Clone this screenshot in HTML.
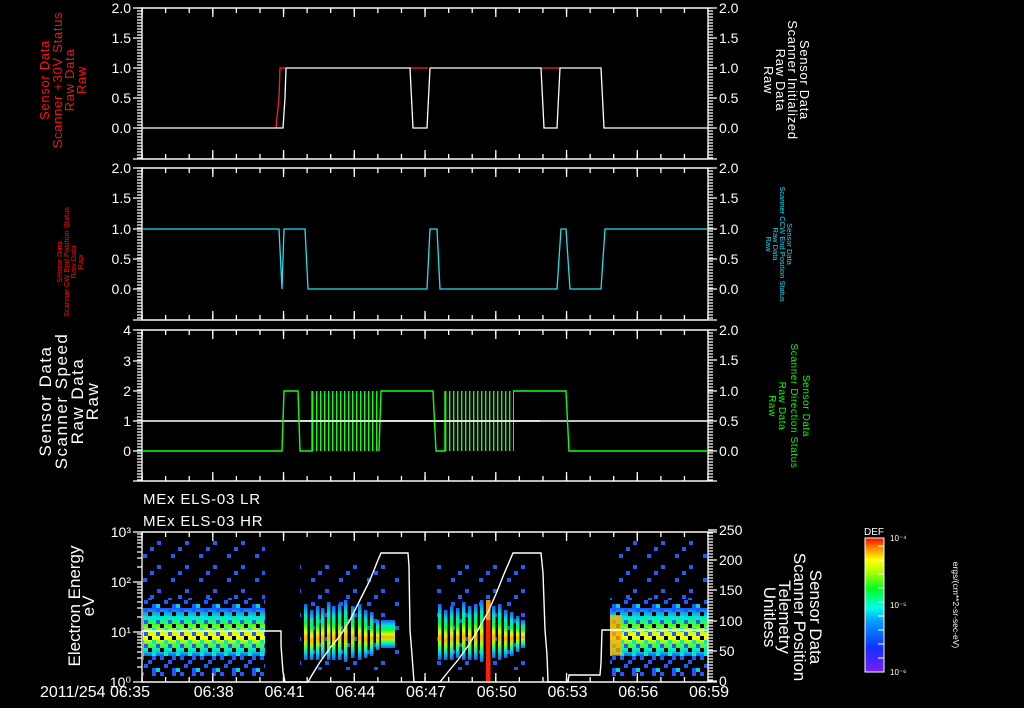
<!DOCTYPE html>
<html><head><meta charset="utf-8"><style>
html,body{margin:0;padding:0;background:#000;}
svg{display:block;font-family:"Liberation Sans",sans-serif;}
</style></head><body>
<svg width="1024" height="708" viewBox="0 0 1024 708" xmlns="http://www.w3.org/2000/svg">
<defs>
<linearGradient id="cb" x1="0" y1="1" x2="0" y2="0">
<stop offset="0" stop-color="#7a1cff"/><stop offset="0.18" stop-color="#1030ff"/><stop offset="0.38" stop-color="#00a0ff"/><stop offset="0.48" stop-color="#00ffe8"/><stop offset="0.62" stop-color="#00ff20"/><stop offset="0.76" stop-color="#c0ff00"/><stop offset="0.84" stop-color="#ffff00"/><stop offset="0.93" stop-color="#ff8000"/><stop offset="1" stop-color="#ff0000"/></linearGradient>
<linearGradient id="band" x1="0" y1="0" x2="0" y2="1">
<stop offset="0" stop-color="#1a5cff"/><stop offset="0.2" stop-color="#00e8d0"/><stop offset="0.35" stop-color="#40ff20"/><stop offset="0.5" stop-color="#d0ff00"/><stop offset="0.62" stop-color="#ffff00"/><stop offset="0.75" stop-color="#60ff20"/><stop offset="0.88" stop-color="#00e8d0"/><stop offset="1" stop-color="#1a5cff"/></linearGradient>
<linearGradient id="col" x1="0" y1="0" x2="0" y2="1">
<stop offset="0" stop-color="#1a5cff"/><stop offset="0.2" stop-color="#00e8d0"/><stop offset="0.35" stop-color="#00ff40"/><stop offset="0.5" stop-color="#e0ff00"/><stop offset="0.6" stop-color="#ffb000"/><stop offset="0.7" stop-color="#a0ff00"/><stop offset="0.85" stop-color="#00e8d0"/><stop offset="1" stop-color="#1a5cff"/></linearGradient>
<pattern id="sparse" width="28" height="24" patternUnits="userSpaceOnUse">
<rect x="3" y="2" width="4" height="4" fill="#1a5cff"/><rect x="17" y="13" width="4" height="4" fill="#1a5cff"/><rect x="10" y="19" width="4" height="4" fill="#1a5cff"/></pattern>
<pattern id="dense" width="20" height="16" patternUnits="userSpaceOnUse">
<rect x="0" y="0" width="4" height="4" fill="#1a5cff"/><rect x="8" y="4" width="4" height="4" fill="#1a5cff"/><rect x="12" y="0" width="4" height="4" fill="#1a5cff"/><rect x="4" y="8" width="4" height="4" fill="#1a5cff"/><rect x="16" y="12" width="4" height="4" fill="#00d0e0"/><rect x="12" y="12" width="4" height="4" fill="#1a5cff"/></pattern>
<pattern id="tex" width="12" height="12" patternUnits="userSpaceOnUse">
<rect x="4" y="0" width="4" height="4" fill="#000"/><rect x="0" y="8" width="4" height="4" fill="#1a5cff"/><rect x="8" y="4" width="4" height="4" fill="#00e8d0"/></pattern>
</defs>
<rect width="1024" height="708" fill="#000"/>

<g>
<rect x="143" y="540" width="122" height="60" fill="url(#sparse)"/>
<rect x="143" y="598" width="122" height="78" fill="url(#dense)"/>
<rect x="143" y="608" width="122" height="48" fill="url(#band)"/>
<rect x="143" y="608" width="122" height="48" fill="url(#tex)"/>
<rect x="610" y="540" width="98" height="60" fill="url(#sparse)"/>
<rect x="610" y="598" width="98" height="78" fill="url(#dense)"/>
<rect x="610" y="608" width="98" height="48" fill="url(#band)"/>
<rect x="610" y="608" width="98" height="48" fill="url(#tex)"/>
<rect x="610" y="615" width="12" height="40" fill="#ffb000" opacity="0.8"/>
<rect x="300" y="560" width="100" height="110" fill="url(#sparse)"/>
<rect x="434" y="560" width="95" height="110" fill="url(#sparse)"/>
<g fill="url(#col)">
<rect x="304" y="604" width="3.5" height="56"/><rect x="310" y="610" width="3.5" height="50"/><rect x="316" y="606" width="3.5" height="54"/><rect x="321" y="608" width="3.5" height="50"/><rect x="327" y="602" width="3.5" height="58"/><rect x="332" y="606" width="3.5" height="54"/><rect x="338" y="604" width="3.5" height="56"/><rect x="344" y="600" width="3.5" height="62"/><rect x="351" y="606" width="3.5" height="52"/><rect x="358" y="604" width="3.5" height="56"/><rect x="364" y="610" width="3.5" height="48"/><rect x="370" y="612" width="3.5" height="44"/><rect x="376" y="620" width="3.5" height="30"/><rect x="381" y="620" width="14" height="28"/>
<rect x="438" y="604" width="3.5" height="56"/><rect x="444" y="610" width="3.5" height="50"/><rect x="450" y="606" width="3.5" height="54"/><rect x="456" y="608" width="3.5" height="50"/><rect x="462" y="602" width="3.5" height="58"/><rect x="468" y="606" width="3.5" height="54"/><rect x="474" y="604" width="3.5" height="56"/><rect x="480" y="600" width="3.5" height="62"/><rect x="492" y="606" width="3.5" height="52"/><rect x="498" y="604" width="3.5" height="56"/><rect x="504" y="610" width="3.5" height="48"/><rect x="510" y="612" width="3.5" height="44"/><rect x="516" y="616" width="3.5" height="36"/><rect x="521" y="620" width="4" height="28"/>
</g>
<rect x="486" y="605" width="4.5" height="77" fill="#ff2000"/>
<rect x="486" y="600" width="4.5" height="20" fill="#ff9000"/>
</g>

<g fill="none" stroke="#fff" stroke-width="1.3">
<rect x="142" y="8" width="566" height="151"/>
<rect x="142" y="168" width="566" height="152"/>
<rect x="142" y="330" width="566" height="151"/>
<rect x="142" y="532" width="566" height="150"/>
<line x1="133" y1="8" x2="717" y2="8"/><line x1="133" y1="159" x2="717" y2="159"/>
<line x1="133" y1="168" x2="717" y2="168"/><line x1="133" y1="320" x2="717" y2="320"/>
<line x1="133" y1="330" x2="717" y2="330"/><line x1="133" y1="481" x2="717" y2="481"/>
<line x1="133" y1="532" x2="717" y2="532"/><line x1="133" y1="682" x2="717" y2="682"/>
<g stroke-width="5" stroke-dasharray="1.2 1.8">
<line x1="139.5" y1="7.4" x2="139.5" y2="159"/><line x1="710.5" y1="7.4" x2="710.5" y2="159"/>
<line x1="139.5" y1="167.4" x2="139.5" y2="320"/><line x1="710.5" y1="167.4" x2="710.5" y2="320"/>
<line x1="139.5" y1="329.4" x2="139.5" y2="481"/><line x1="710.5" y1="329.4" x2="710.5" y2="481"/>
<line x1="710.5" y1="529.4" x2="710.5" y2="682"/>
</g>
<path d="M133 38H142M133 68H142M133 98H142M133 128H142M708 38H717M708 68H717M708 98H717M708 128H717
M133 198H142M133 229H142M133 259H142M133 289H142M708 198H717M708 229H717M708 259H717M708 289H717
M133 361H142M133 391H142M133 421H142M133 451H142M708 360H717M708 391H717M708 421H717M708 451H717
M708 530H717M708 560H717M708 590H717M708 621H717M708 651H717M708 681H717
M133 632H142M133 582H142
M137 667H142M137 658H142M137 652H142M137 647H142M137 643H142M137 640H142M137 637H142M137 634H142
M137 617H142M137 608H142M137 602H142M137 597H142M137 593H142M137 590H142M137 587H142M137 584H142
M137 567H142M137 558H142M137 552H142M137 547H142M137 543H142M137 540H142M137 537H142M137 534H142"/>
<g stroke-width="5" stroke-dasharray="1.3 22.283">
<line x1="141.4" y1="10.5" x2="708" y2="10.5"/><line x1="141.4" y1="156.5" x2="708" y2="156.5"/>
<line x1="141.4" y1="170.5" x2="708" y2="170.5"/><line x1="141.4" y1="317.5" x2="708" y2="317.5"/>
<line x1="141.4" y1="332.5" x2="708" y2="332.5"/><line x1="141.4" y1="478.5" x2="708" y2="478.5"/>
<line x1="141.4" y1="534.5" x2="708" y2="534.5"/><line x1="141.4" y1="679.5" x2="708" y2="679.5"/>
</g>
<g stroke-width="9" stroke-dasharray="1.3 69.45">
<line x1="141.4" y1="12.5" x2="708" y2="12.5"/><line x1="141.4" y1="154.5" x2="708" y2="154.5"/>
<line x1="141.4" y1="172.5" x2="708" y2="172.5"/><line x1="141.4" y1="315.5" x2="708" y2="315.5"/>
<line x1="141.4" y1="334.5" x2="708" y2="334.5"/><line x1="141.4" y1="476.5" x2="708" y2="476.5"/>
<line x1="141.4" y1="536.5" x2="708" y2="536.5"/><line x1="141.4" y1="677.5" x2="708" y2="677.5"/>
</g>
<polyline stroke="#ff2020" points="276,128 279,98 280,68 285,68"/>
<line stroke="#ff2020" x1="410" y1="68" x2="428" y2="68"/><line stroke="#ff2020" x1="541" y1="68" x2="560" y2="68"/>
<polyline points="142,128 283,128 285,98 286,68 410,68 413,128 427,128 430,68 541,68 544,128 557,128 560,68 601,68 604,128 708,128"/>
<polyline stroke="#20e0f0" points="142,229 279,229 282,289 284,229 305,229 308,289 427,289 430,229 437,229 440,289 557,289 561,229 566,229 570,289 601,289 605,229 708,229"/>
<line x1="142" y1="421" x2="708" y2="421" stroke-width="1.6"/>
<polyline stroke="#10ff10" stroke-width="1.4" points="142,451 282,451 284,391 298,391 300,451 304,451 308,451 312,451 312,391"/>
<polyline stroke="#10ff10" stroke-width="1.4" points="379,451 381,391 433,391 436,451 445,451 445,391"/>
<polyline stroke="#10ff10" stroke-width="1.4" points="513,391 515,391 566,391 569,451 708,451"/>
<line stroke="#10ff10" x1="312" y1="421" x2="380" y2="421" stroke-width="60" stroke-dasharray="1.4 2.6"/>
<line stroke="#10ff10" x1="445" y1="421" x2="514" y2="421" stroke-width="60" stroke-dasharray="1.4 2.6"/>
<line stroke="#fff" x1="300" y1="421" x2="540" y2="421" stroke-width="1.4"/>
<polyline stroke-width="1.4" points="142,631 281,631 281,645 283,672 285,682 308,682 312,675 320,662 330,648 340,636 350,620 360,600 370,580 378,560 381,553 408,553 409,566 410,630 412,655 414,682 440,682 448,672 458,660 468,646 478,630 488,612 496,594 504,574 510,560 513,553 541,553 543,573 545,630 547,655 548,682 568,682 569,675 600,675 601,663 602,630 708,630"/>
</g>

<g fill="#fff" font-size="14" text-anchor="end">
<text x="131" y="13">2.0</text><text x="131" y="43">1.5</text><text x="131" y="73">1.0</text><text x="131" y="103">0.5</text><text x="131" y="133">0.0</text>
<text x="131" y="173">2.0</text><text x="131" y="203">1.5</text><text x="131" y="234">1.0</text><text x="131" y="264">0.5</text><text x="131" y="294">0.0</text>
<text x="131" y="335">4</text><text x="131" y="366">3</text><text x="131" y="396">2</text><text x="131" y="426">1</text><text x="131" y="456">0</text>
<text x="131" y="537">10³</text><text x="131" y="587">10²</text><text x="131" y="637">10¹</text><text x="131" y="687">10⁰</text>
</g>
<g fill="#fff" font-size="14">
<text x="719" y="13">2.0</text><text x="719" y="43">1.5</text><text x="719" y="73">1.0</text><text x="719" y="103">0.5</text><text x="719" y="133">0.0</text>
<text x="719" y="173">2.0</text><text x="719" y="203">1.5</text><text x="719" y="234">1.0</text><text x="719" y="264">0.5</text><text x="719" y="294">0.0</text>
<text x="719" y="335">2.0</text><text x="719" y="365">1.5</text><text x="719" y="396">1.0</text><text x="719" y="426">0.5</text><text x="719" y="456">0.0</text>
<text x="719" y="535">250</text><text x="719" y="565">200</text><text x="719" y="595">150</text><text x="719" y="626">100</text><text x="719" y="656">50</text><text x="719" y="686">0</text>
</g>
<g fill="#fff" font-size="16" text-anchor="middle">
<text x="40" y="697" text-anchor="start">2011/254 06:35</text>
<text x="213.75" y="697">06:38</text><text x="284.5" y="697">06:41</text><text x="355.25" y="697">06:44</text><text x="426" y="697">06:47</text><text x="496.75" y="697">06:50</text><text x="567.5" y="697">06:53</text><text x="638.25" y="697">06:56</text><text x="709" y="697">06:59</text>
</g>

<g font-size="13" fill="#ff1010" text-anchor="middle" letter-spacing="0.7">
<text transform="translate(49,80) rotate(-90)">Sensor Data</text>
<text transform="translate(62,80) rotate(-90)">Scanner +30V Status</text>
<text transform="translate(74,80) rotate(-90)">Raw Data</text>
<text transform="translate(86,80) rotate(-90)">Raw</text>
</g>
<g font-size="7.5" fill="#ff1010" text-anchor="middle">
<text transform="translate(62,262) rotate(-90)">Sensor Data</text>
<text transform="translate(69,262) rotate(-90)">Scanner CW End Position Status</text>
<text transform="translate(76,262) rotate(-90)">Raw Data</text>
<text transform="translate(83,262) rotate(-90)">Raw</text>
</g>
<g font-size="17" fill="#fff" text-anchor="middle" letter-spacing="1.5">
<text transform="translate(51,401) rotate(-90)">Sensor Data</text>
<text transform="translate(67,401) rotate(-90)">Scanner Speed</text>
<text transform="translate(83,401) rotate(-90)">Raw Data</text>
<text transform="translate(98,401) rotate(-90)">Raw</text>
</g>
<g font-size="17" fill="#fff" text-anchor="middle">
<text transform="translate(80,606) rotate(-90)">Electron Energy</text>
<text transform="translate(94,606) rotate(-90)">eV</text>
</g>
<g font-size="13" fill="#fff" text-anchor="middle" letter-spacing="0.7">
<text transform="translate(800,80) rotate(90)">Sensor Data</text>
<text transform="translate(788,80) rotate(90)">Scanner Initialized</text>
<text transform="translate(776,80) rotate(90)">Raw Data</text>
<text transform="translate(764,80) rotate(90)">Raw</text>
</g>
<g font-size="7.5" fill="#00e0ff" text-anchor="middle">
<text transform="translate(787,244) rotate(90)">Sensor Data</text>
<text transform="translate(780,244) rotate(90)">Scanner CCW End Position Status</text>
<text transform="translate(773,244) rotate(90)">Raw Data</text>
<text transform="translate(766,244) rotate(90)">Raw</text>
</g>
<g font-size="10" fill="#00ff00" text-anchor="middle" letter-spacing="0.6">
<text transform="translate(803,406) rotate(90)">Sensor Data</text>
<text transform="translate(791,406) rotate(90)">Scanner Direction Status</text>
<text transform="translate(779,406) rotate(90)">Raw Data</text>
<text transform="translate(769,406) rotate(90)">Raw</text>
</g>
<g font-size="17" fill="#fff" text-anchor="middle">
<text transform="translate(810,617) rotate(90)">Sensor Data</text>
<text transform="translate(794,617) rotate(90)">Scanner Position</text>
<text transform="translate(779,617) rotate(90)">Telemetry</text>
<text transform="translate(764,617) rotate(90)">Unitless</text>
</g>
<text x="143" y="504" font-size="15" fill="#fff" letter-spacing="0.8">MEx ELS-03 LR</text>
<text x="143" y="526" font-size="15" fill="#fff" letter-spacing="0.8">MEx ELS-03 HR</text>
<rect x="865" y="538" width="19" height="134" fill="url(#cb)" stroke="#fff" stroke-width="1"/>
<path d="M878 546H884M878 560H884M878 574H884M878 588H884M878 602H884M878 616H884M878 630H884M878 644H884M878 658H884" stroke="#fff" stroke-width="1"/>
<text x="874" y="535" font-size="10" fill="#fff" text-anchor="middle">DEF</text>
<g font-size="8" fill="#fff"><text x="890" y="541">10⁻⁴</text><text x="890" y="608">10⁻⁵</text><text x="890" y="675">10⁻⁶</text></g>
<text transform="translate(953,605) rotate(90)" font-size="8.5" fill="#fff" text-anchor="middle">ergs/(cm**2-sr-sec-eV)</text>
</svg>
</body></html>
